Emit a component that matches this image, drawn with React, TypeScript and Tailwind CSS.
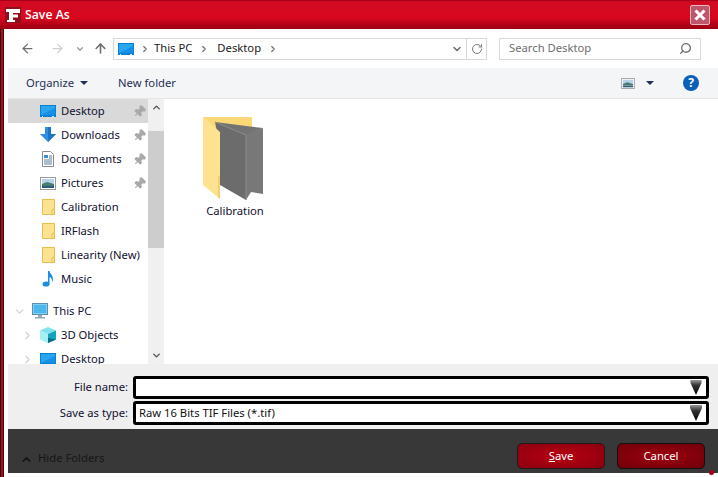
import { ChevronDown, ChevronRight, ChevronUp, Pin, RotateCw, Search, ArrowLeft, ArrowRight, ArrowUp } from 'lucide-react'

function MonitorBlue({ size = 16 }: { size?: number }) {
  return (
    <svg width={size} height={size} viewBox="0 0 16 16">
      <rect x="0" y="2" width="16" height="12" fill="#0a7fd6" />
      <rect x="1" y="3" width="14" height="9" fill="#29a6f2" />
      <path d="M1 12 L15 5 V12 Z" fill="#1590e6" />
      <rect x="2" y="13" width="1" height="1" fill="#d8eefc" />
      <rect x="12" y="13" width="2" height="1" fill="#d8eefc" />
    </svg>
  )
}

function DownloadIcon() {
  return (
    <svg width="16" height="16" viewBox="0 0 16 16">
      <path d="M5 0 H11 V7 H16 L8 15 L0 7 H5 Z" fill="#2f8fe0" />
      <path d="M8 0 H11 V7 H16 L8 15 Z" fill="#1b74c6" />
    </svg>
  )
}

function DocumentIcon() {
  return (
    <svg width="16" height="16" viewBox="0 0 16 16">
      <path d="M2.5 0.5 H10.5 L13.5 3.5 V15.5 H2.5 Z" fill="#fff" stroke="#8a8a8a" />
      <rect x="4" y="4" width="4" height="3" fill="#3a8ed8" />
      <path d="M9 5 H12 M9 7 H12 M4 9 H12 M4 11 H12 M4 13 H12" stroke="#5a7d9a" strokeWidth="1" />
    </svg>
  )
}

function PictureIcon({ w = 16, h = 13 }: { w?: number; h?: number }) {
  return (
    <svg width={w} height={h} viewBox="0 0 16 13">
      <rect x="0.5" y="0.5" width="15" height="12" fill="#fff" stroke="#9a9a9a" />
      <rect x="2" y="2" width="12" height="5" fill="#b7d3ea" />
      <path d="M2 7 L7 5 L14 7 V9 H2 Z" fill="#4a7a70" />
      <rect x="2" y="9" width="12" height="2" fill="#2f5f78" />
    </svg>
  )
}

function SmallFolder() {
  return (
    <svg width="13" height="16" viewBox="0 0 13 16">
      <rect x="0.5" y="0.5" width="12" height="15" fill="#fde28f" stroke="#e8bd50" />
      <path d="M10 15 V11 L12 10" fill="none" stroke="#e8bd50" />
    </svg>
  )
}

function MusicIcon() {
  return (
    <svg width="16" height="16" viewBox="0 0 16 16">
      <ellipse cx="6" cy="13" rx="3.5" ry="2.6" fill="#1b8ee0" />
      <path d="M8 13 V0 H9.5 C10 3 13 4 13 8 C13 9.5 12.5 10.5 12 11 C12.3 8 11 6.5 9.5 6 V13 Z" fill="#1b8ee0" />
    </svg>
  )
}

function ThisPcIcon() {
  return (
    <svg width="16" height="16" viewBox="0 0 16 16">
      <rect x="0.5" y="0.5" width="15" height="11" fill="#7fd0f5" stroke="#5a8fb0" />
      <rect x="2" y="2" width="12" height="8" fill="#4db8ee" />
      <rect x="6" y="12" width="4" height="2" fill="#9ab" />
      <rect x="3" y="14" width="10" height="1.5" fill="#8fa6b5" />
    </svg>
  )
}

function CubeIcon() {
  return (
    <svg width="16" height="16" viewBox="0 0 16 16">
      <path d="M8 0 L16 3.5 L8 7 L0 3.5 Z" fill="#7fe3ee" />
      <path d="M0 3.5 L8 7 V16 L0 12.5 Z" fill="#a5eef2" />
      <path d="M16 3.5 L8 7 V16 L16 12.5 Z" fill="#14a3b8" />
      <path d="M8 11 L16 12.5 L8 16 Z" fill="#0a6f8a" />
    </svg>
  )
}

function BigFolder() {
  return (
    <svg width="60" height="84" viewBox="0 0 60 84">
      {/* back of the folder */}
      <path d="M0 0 H49 V12 H0 Z" fill="#fbd976" />
      {/* open pages */}
      <path d="M12 5 L60 11 L43 19 Z" fill="#737373" />
      <path d="M43 18 L60 11 V77 L48 75 L43 83 Z" fill="#787878" />
      <path d="M12 5 L43 18 V83 L17 68 V30 Z" fill="#6c6c6c" />
      <path d="M12 5 L43 18 M43 18 V83" stroke="#8c8c8c" strokeWidth="1" fill="none" />
      {/* front flap */}
      <path d="M0 0 L17 15 V82 L0 68 Z" fill="#fde28f" />
      <path d="M17 15 V58 L15 60 V80 L17 82 Z" fill="#f3cf70" />
    </svg>
  )
}

function NavRow({ icon, label, pinned, active }: { icon: React.ReactNode; label: string; pinned?: boolean; active?: boolean }) {
  return (
    <div className={`flex h-6 shrink-0 items-center pl-8 pr-[2px] ${active ? 'bg-[#d9d9d9]' : ''}`}>
      <span className="flex w-4 shrink-0 justify-center">{icon}</span>
      <span className="ml-[5px] flex-1 whitespace-nowrap text-[#101030]">{label}</span>
      {pinned && <Pin size={13} className="rotate-45 fill-[#a8a8a8] text-[#a8a8a8]" />}
    </div>
  )
}

function TreeRow({ icon, label, open, indent }: { icon: React.ReactNode; label: string; open?: boolean; indent?: boolean }) {
  const chevron = open ? (
    <ChevronDown size={13} className="text-[#d5d5d5]" strokeWidth={2.5} />
  ) : (
    <ChevronRight size={13} className="text-[#d5d5d5]" strokeWidth={2.5} />
  )
  return (
    <div className={`flex h-6 shrink-0 items-center ${indent ? 'pl-[13px]' : 'pl-[5px]'}`}>
      <span className={`flex w-[13px] shrink-0 justify-center ${indent ? 'mr-[6px]' : 'mr-[3px]'}`}>{chevron}</span>
      <span className={`flex w-4 shrink-0 justify-center ${indent ? 'ml-[0px]' : 'ml-[3px]'}`}>{icon}</span>
      <span className="ml-[5px] whitespace-nowrap text-[#101030]">{label}</span>
    </div>
  )
}

function ComboArrow({ big }: { big?: boolean }) {
  return (
    <svg width="14" height={big ? 16 : 15} viewBox="0 0 14 16">
      <defs>
        <linearGradient id={big ? 'arrowA' : 'arrowB'} x1="0" y1="0" x2="0" y2="1">
          <stop offset="0" stopColor="#9a9a9a" />
          <stop offset="0.35" stopColor="#333" />
          <stop offset="1" stopColor="#000" />
        </linearGradient>
      </defs>
      <path d="M1 0 H13 V3 L7 16 L1 3 Z" fill={`url(#${big ? 'arrowA' : 'arrowB'})`} />
    </svg>
  )
}

function FormRow({ label, value, big }: { label: string; value?: string; big?: boolean }) {
  return (
    <div className="flex items-center">
      <span className="w-[120px] text-right text-[#101030]">{label}</span>
      <div className={`ml-[5px] flex w-[576px] items-center justify-between rounded-[3px] border-[3px] border-black bg-white pl-[3px] pr-[3px] ${big ? 'h-[24px]' : 'h-[23px]'}`}>
        <span className="text-[#111]">{value}</span>
        <ComboArrow big={big} />
      </div>
    </div>
  )
}

export default function App() {
  return (
    <div className="relative flex h-[477px] w-[718px] flex-col overflow-hidden bg-white text-[11.25px] font-['Noto_Sans',sans-serif]">
      {/* Title bar */}
      <div className="flex h-[29px] shrink-0 items-center justify-between border-t border-[#a8001a] bg-gradient-to-b from-[#cf0a22] via-[#d9081f] via-60% to-[#9a0012] pl-[5px] pr-[8px]">
        <div className="flex items-center">
          <svg width="16" height="16" viewBox="0 0 16 16">
            <rect width="16" height="16" fill="#8c1020" />
            <path d="M1 2 H15 V6 H8 V7.5 H13 V10.5 H8 V13 H10 V15 H2 V13 H4 V5 H1 Z" fill="#fff" />
          </svg>
          <span className="ml-[4px] text-[12.25px] font-semibold text-white font-['Open_Sans',sans-serif]">Save As</span>
        </div>
        <div className="flex h-5 w-5 items-center justify-center rounded-[2px] border border-[#e8b8c0] bg-[#c0566a]">
          <svg width="12" height="12" viewBox="0 0 12 12">
            <path d="M1.5 1.5 L10.5 10.5 M10.5 1.5 L1.5 10.5" stroke="#fff" strokeWidth="3" />
          </svg>
        </div>
      </div>

      <div className="flex min-h-0 flex-1">
        {/* Left edge */}
        <div className="flex w-[8px] shrink-0">
          <div className="w-[1px] bg-[#1d0a0c]" />
          <div className="w-[2px] bg-[#b3061c]" />
          <div className="w-[1px] bg-[#3a0a10]" />
        </div>

        <div className="flex min-w-0 flex-1 flex-col">
          {/* Address row */}
          <div className="flex h-[39px] shrink-0 items-center text-[#2b2b2b]">
            <ArrowLeft size={15} className="ml-[12px] text-[#6f6f6f]" strokeWidth={2} />
            <ArrowRight size={15} className="ml-[15px] text-[#cfcfcf]" strokeWidth={2} />
            <ChevronDown size={10} className="ml-[10px] text-[#9a9a9a]" strokeWidth={3} />
            <ArrowUp size={15} className="ml-[8px] text-[#6f6f6f]" strokeWidth={2.5} />
            <div className="ml-[5px] flex h-[22px] w-[374px] items-center border border-[#d9d9d9] pl-[4px]">
              <MonitorBlue />
              <ChevronRight size={10} className="ml-[6px] text-[#777]" strokeWidth={3} />
              <span className="ml-[4px] text-[#202020]">This PC</span>
              <ChevronRight size={10} className="ml-[7px] text-[#777]" strokeWidth={3} />
              <span className="ml-[8px] text-[#202020]">Desktop</span>
              <ChevronRight size={10} className="ml-[7px] text-[#777]" strokeWidth={3} />
              <span className="flex-1" />
              <ChevronDown size={12} className="mr-[3px] text-[#6f6f6f]" strokeWidth={3} />
              <div className="flex h-full w-[20px] items-center justify-center border-l border-[#d9d9d9]">
                <RotateCw size={12} className="text-[#7a7a7a]" strokeWidth={2} />
              </div>
            </div>
            <div className="ml-[12px] flex h-[22px] w-[202px] items-center justify-between border border-[#d9d9d9] pl-[9px] pr-[8px]">
              <span className="text-[#6e6e6e]">Search Desktop</span>
              <Search size={13} className="-scale-x-100 text-[#6f6f6f]" strokeWidth={2.5} />
            </div>
          </div>

          {/* Toolbar */}
          <div className="flex h-[31px] shrink-0 items-center border-b border-[#e6e6e6] bg-[#f4f5f7] pl-[18px] pr-[19px] text-[#1f2f55]">
            <span>Organize</span>
            <span className="ml-[6px] h-0 w-0 border-x-[4px] border-t-[4px] border-x-transparent border-t-[#1f2f55]" />
            <span className="ml-[30px]">New folder</span>
            <span className="flex-1" />
            <PictureIcon w={14} h={11} />
            <span className="ml-[11px] h-0 w-0 border-x-[4px] border-t-[4px] border-x-transparent border-t-[#1f2f55]" />
            <div className="ml-[29px] flex h-4 w-4 items-center justify-center rounded-full bg-[#0a5fb8] text-[12px] font-bold text-white">?</div>
          </div>

          {/* Nav + contents */}
          <div className="flex min-h-0 flex-1">
            <div className="flex w-[140px] shrink-0 flex-col overflow-hidden">
              <NavRow icon={<MonitorBlue />} label="Desktop" pinned active />
              <NavRow icon={<DownloadIcon />} label="Downloads" pinned />
              <NavRow icon={<DocumentIcon />} label="Documents" pinned />
              <NavRow icon={<PictureIcon />} label="Pictures" pinned />
              <NavRow icon={<SmallFolder />} label="Calibration" />
              <NavRow icon={<SmallFolder />} label="IRFlash" />
              <NavRow icon={<SmallFolder />} label="Linearity (New)" />
              <NavRow icon={<MusicIcon />} label="Music" />
              <div className="h-2 shrink-0" />
              <TreeRow icon={<ThisPcIcon />} label="This PC" open />
              <TreeRow icon={<CubeIcon />} label="3D Objects" indent />
              <TreeRow icon={<MonitorBlue />} label="Desktop" indent />
            </div>

            {/* Scrollbar */}
            <div className="flex w-[16px] shrink-0 flex-col items-center bg-[#f0f0f0]">
              <div className="flex h-[17px] w-full shrink-0 items-center justify-center">
                <ChevronUp size={11} className="text-[#505050]" strokeWidth={3} />
              </div>
              <div className="mt-[15px] h-[117px] w-full shrink-0 bg-[#cdcdcd]" />
              <div className="flex-1" />
              <div className="flex h-[17px] w-full shrink-0 items-center justify-center">
                <ChevronDown size={11} className="text-[#505050]" strokeWidth={3} />
              </div>
            </div>

            <div className="min-w-0 flex-1 pl-[29px] pt-[18px]">
              <div className="flex w-[84px] flex-col items-center">
                <div className="mr-[4px]">
                  <BigFolder />
                </div>
                <span className="mt-[2px] whitespace-nowrap text-[#101030]">Calibration</span>
              </div>
            </div>
          </div>

          {/* File name form */}
          <div className="flex h-[65px] shrink-0 flex-col justify-start gap-[2px] bg-[#efefef] pt-[12px]">
            <FormRow label="File name:" />
            <FormRow label="Save as type:" value="Raw 16 Bits TIF Files (*.tif)" big />
          </div>

          {/* Button bar */}
          <div className="flex h-[44px] shrink-0 items-start bg-[#383838] pl-[12px] pr-[13px]">
            <ChevronUp size={13} className="mt-[24px] text-[#161616]" strokeWidth={3} />
            <span className="ml-[5px] mt-[21px] text-[#161616]">Hide Folders</span>
            <span className="flex-1" />
            <button className="mt-[14px] h-[26px] w-[88px] rounded-[5px] border border-[#1c1c1c] bg-[radial-gradient(ellipse_at_center,#b80010,#8c0010)] text-white">
              <span className="underline">S</span>ave
            </button>
            <button className="ml-[12px] mt-[14px] h-[26px] w-[88px] rounded-[5px] border border-[#111] bg-[radial-gradient(ellipse_at_center,#a00010,#6e0008)] text-white">
              Cancel
            </button>
          </div>
          <div className="h-[4px] shrink-0 bg-white" />
        </div>
      </div>
      <div className="absolute bottom-[2px] right-[4px] h-[5px] w-[5px] rounded-full bg-[#a00018]" />
    </div>
  )
}
